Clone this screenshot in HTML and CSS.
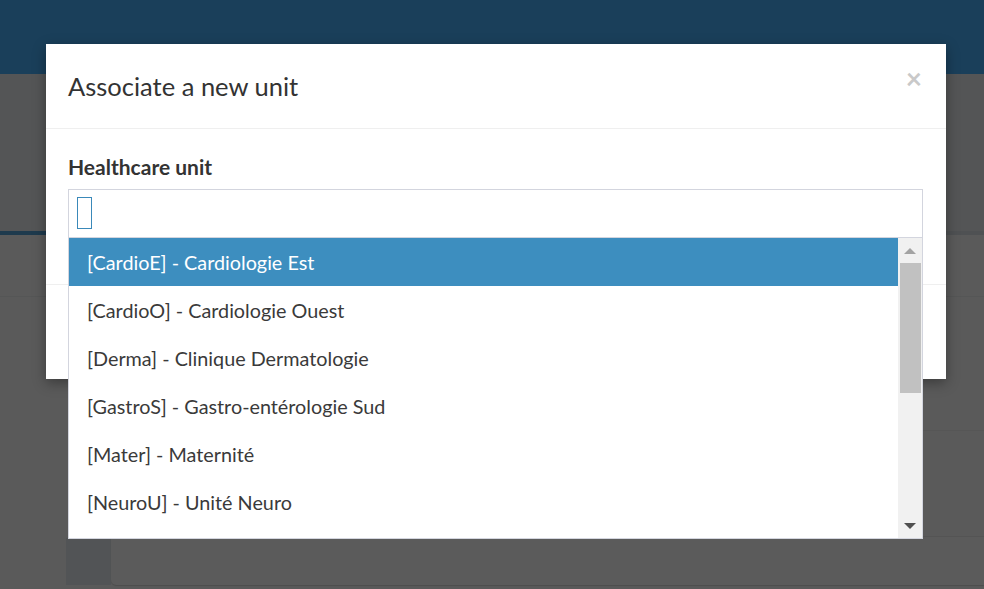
FILE: index.html
```
<!DOCTYPE html>
<html>
<head>
<meta charset="utf-8">
<link rel="stylesheet" href="styles.css">
</head>
<body>
<div class="page">
  <div class="topbar"></div>
  <div class="band"></div>
  <div class="tabline"><div class="tab-active"></div></div>
  <div class="content">
    <div class="row row-first"></div>
    <div class="lower">
      <div class="gutter"></div>
      <div class="side"><div class="side-top"></div><div class="side-bottom"></div></div>
      <div class="main">
        <div class="main-row main-row-a"></div>
        <div class="main-row main-row-b"></div>
        <div class="card"></div>
      </div>
    </div>
  </div>
</div>

<div class="modal">
  <div class="modal-header">
    <h4 class="modal-title">Associate a new unit</h4>
    <span class="close">×</span>
  </div>
  <div class="modal-body">
    <label class="field-label">Healthcare unit</label>
    <div class="select">
      <div class="search-box"><span class="search-field"></span></div>
      <div class="dropdown">
        <ul class="options">
          <li class="option active">[CardioE] - Cardiologie Est</li>
          <li class="option">[CardioO] - Cardiologie Ouest</li>
          <li class="option">[Derma] - Clinique Dermatologie</li>
          <li class="option">[GastroS] - Gastro-entérologie Sud</li>
          <li class="option">[Mater] - Maternité</li>
          <li class="option">[NeuroU] - Unité Neuro</li>
        </ul>
        <div class="scrollbar">
          <div class="sb-btn"><span class="arrow-up"></span></div>
          <div class="sb-track"><div class="sb-thumb"></div></div>
          <div class="sb-btn"><span class="arrow-down"></span></div>
        </div>
      </div>
    </div>
  </div>
  <div class="modal-footer"></div>
</div>
</body>
</html>
```

FILE: styles.css
```
* { box-sizing: border-box; }
html, body { margin: 0; padding: 0; }
body {
  width: 984px;
  height: 589px;
  overflow: hidden;
  background: #5a5a5a;
  font-family: Lato, "Open Sans", sans-serif;
  position: relative;
}
.page { display: flex; flex-direction: column; height: 589px; }
.topbar { height: 74px; background: #1a3f5a; }
.band { height: 157px; background: #545556; }
.tabline { height: 4px; background: #4f5153; display: flex; }
.tab-active { width: 500px; background: #1e3a4d; }
.content { flex: 1; display: flex; flex-direction: column; background: #5a5a5a; }
.row-first { height: 62px; border-bottom: 1px solid #555656; }
.lower { flex: 1; display: flex; }
.gutter { width: 66px; }
.side { width: 45px; display: flex; flex-direction: column; }
.side-top { height: 241px; }
.side-bottom { flex: 1; background: #525456; margin-bottom: 4px; }
.main { flex: 1; display: flex; flex-direction: column; }
.main-row-a { height: 134px; border-bottom: 1px solid #565656; }
.main-row-b { height: 106px; border-bottom: 1px solid #545454; }
.card { height: 48px; background: #5b5b5b; border-bottom-left-radius: 5px; box-shadow: 0 1px 1px rgba(0,0,0,0.15); }

.modal {
  position: absolute;
  top: 44px;
  left: 46px;
  width: 900px;
  background: #fff;
  box-shadow: 0 4px 12px rgba(0,0,0,0.35);
}
.modal-header {
  height: 85px;
  padding: 0 22px;
  border-bottom: 1px solid #efefef;
  display: flex;
  align-items: center;
  justify-content: space-between;
}
.modal-title {
  margin: 0;
  font-weight: 400;
  font-size: 25.5px;
  color: #333;
}
.close {
  font-size: 28px;
  font-weight: 700;
  color: #c9c9c9;
  margin-right: 2px;
  line-height: 1;
  margin-top: -17px;
}
.modal-body { padding: 25px 23px 46px 22px; height: 155px; }
.field-label {
  display: block;
  font-weight: 700;
  font-size: 21px;
  color: #333;
  line-height: 26px;
  margin-bottom: 9px;
}
.select { position: relative; }
.search-box {
  height: 49px;
  border: 1px solid #d3d5de;
  padding: 7px 8px;
}
.search-field {
  display: block;
  width: 15px;
  height: 32px;
  border: 1px solid #3a89b9;
}
.dropdown {
  position: absolute;
  top: 49px;
  left: 0;
  right: 0;
  height: 301px;
  background: #fff;
  border: 1px solid #d3d5de;
  border-top: none;
  display: flex;
  z-index: 5;
}
.options {
  flex: 1;
  list-style: none;
  margin: 0;
  padding: 0;
  overflow: hidden;
}
.option {
  height: 48px;
  line-height: 48px;
  padding-left: 18px;
  font-size: 19.8px;
  color: #3a3a3a;
}
.option.active { background: #3d8ebf; color: #fff; }
.scrollbar {
  width: 24px;
  background: #f1f1f1;
  display: flex;
  flex-direction: column;
}
.sb-btn { height: 25px; display: flex; align-items: center; justify-content: center; }
.sb-track { flex: 1; padding: 0 1px 0 2px; }
.sb-thumb { height: 130px; background: #c1c1c1; }
.arrow-up {
  width: 0; height: 0;
  border-left: 6px solid transparent;
  border-right: 6px solid transparent;
  border-bottom: 6px solid #a3a3a3;
}
.arrow-down {
  width: 0; height: 0;
  border-left: 6px solid transparent;
  border-right: 6px solid transparent;
  border-top: 6px solid #505050;
}
.modal-footer { height: 95px; border-top: 1px solid #efefef; }
```
